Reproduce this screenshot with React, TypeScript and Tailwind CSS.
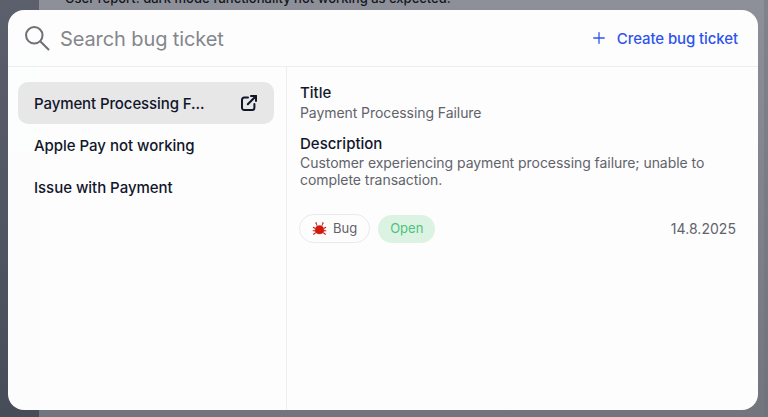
import { Plus } from 'lucide-react';

const tickets = ['Payment Processing Failure', 'Apple Pay not working', 'Issue with Payment'];

function SearchIcon() {
  return (
    <svg viewBox="0 0 24 24" className="h-[26px] w-[26px] text-[#6f7177]" fill="none" stroke="currentColor" strokeWidth={1.9} strokeLinecap="round">
      <circle cx="9.5" cy="9.5" r="7.6" />
      <path d="M15.2 15.2 22.6 22.6" />
    </svg>
  );
}

function OpenIcon() {
  return (
    <svg viewBox="0 0 18 18" className="h-[18px] w-[18px] text-[#11162b]" fill="none" stroke="currentColor" strokeWidth={2} strokeLinecap="round" strokeLinejoin="round">
      <path d="M8 3.6H4.2A2.2 2.2 0 0 0 2 5.8v8A2.2 2.2 0 0 0 4.2 16h8a2.2 2.2 0 0 0 2.2-2.2V10" />
      <path d="M7.8 10.2 16 2" />
      <path d="M11 2h5v5" />
    </svg>
  );
}

function BugIcon() {
  return (
    <svg viewBox="0 0 16 16" className="h-[15px] w-[15px]" fill="#d0190f" stroke="#d0190f">
      <path d="M3.2 10c0-3.2 2-5.2 4.8-5.2s4.8 2 4.8 5.2c0 2.2-2 3.8-4.8 3.8S3.2 12.2 3.2 10Z" strokeWidth={0.4} />
      <path d="M1 6.6 3.6 8M15 6.6 12.4 8M.8 10.4h2.6M15.2 10.4h-2.6M1.4 14.4l2.6-2M14.6 14.4l-2.6-2M5.4 4.8 4.6 3.4M10.6 4.8l.8-1.4" strokeWidth={1.2} fill="none" />
      <circle cx="4.4" cy="2.2" r="0.9" strokeWidth={0} />
      <circle cx="11.6" cy="2.2" r="0.9" strokeWidth={0} />
    </svg>
  );
}

export default function App() {
  return (
    <div className="relative flex h-[417px] w-[768px] overflow-hidden bg-gradient-to-b from-[#8d9099] to-[#72757e] font-['Inter',sans-serif]">
      {/* page behind the dialog */}
      <div className="w-[39px] shrink-0 bg-gradient-to-b from-[#5b606c] to-[#474c59]" />
      <div className="flex-1 pl-[26px] text-[#14161c]">
        <p className="-mt-[10px] text-[13px] font-medium leading-[16px]">
          User report: dark mode functionality not working as expected.
        </p>
      </div>
      <div className="w-[4px] shrink-0 bg-[#6d7079]/40" />

      {/* dialog */}
      <div className="absolute left-2 top-[10px] flex h-[400px] w-[750px] flex-col rounded-2xl bg-white/[0.985]">
        <div className="flex h-[57px] shrink-0 items-center justify-between border-b border-[#eeeef0] pl-4 pr-5">
          <div className="flex items-center gap-[10px]">
            <SearchIcon />
            <span className="pt-[1px] text-[20px] tracking-[-0.1px] text-[#84868c]">Search bug ticket</span>
          </div>
          <button className="flex items-center gap-[9px] text-[15px] font-medium leading-[20px] tracking-[-0.1px] text-[#2f54eb]">
            <Plus className="h-[18px] w-[18px]" strokeWidth={1.75} />
            <span className="pt-[1px]">Create bug ticket</span>
          </button>
        </div>

        <div className="flex min-h-0 flex-1">
          <div className="w-[279px] shrink-0 border-r border-[#eeeef0] pl-[10px] pr-[12px] pt-[15px]">
            <div className="flex flex-col">
              <div className="flex h-[42px] items-center justify-between rounded-[10px] bg-[#e7e7e7] pl-4 pr-4">
                <span className="pt-[1px] text-[15px] font-medium leading-[20px] tracking-[-0.1px] text-[#11162b]">Payment Processing F...</span>
                <OpenIcon />
              </div>
              {tickets.slice(1).map((t) => (
                <div key={t} className="flex h-[42px] items-center pl-4">
                  <span className="pt-[1px] text-[15px] font-medium leading-[20px] tracking-[-0.03px] text-[#11162b]">{t}</span>
                </div>
              ))}
            </div>
          </div>

          <div className="flex flex-1 flex-col pl-[13px] pr-[22px] pt-[16px]">
            <h3 className="text-[15px] font-medium leading-[20px] text-[#11162b]">Title</h3>
            <p className="text-[14px] leading-[20px] tracking-[-0.07px] text-[#61636b]">Payment Processing Failure</p>
            <h3 className="mt-[11px] text-[15px] font-medium leading-[20px] text-[#11162b]">Description</h3>
            <p className="text-[14px] leading-[17px] tracking-[-0.05px] text-[#61636b]">
              Customer experiencing payment processing failure; unable to complete transaction.
            </p>
            <div className="mt-[26px] flex items-center justify-between">
              <div className="-ml-[1px] flex items-center gap-2">
                <span className="flex h-[29px] items-center gap-[6px] rounded-full border border-[#eaeaec] px-3 text-[13px] text-[#61636b]">
                  <BugIcon />
                  Bug
                </span>
                <span className="flex h-[28px] items-center rounded-full bg-[#dcf3e4] px-3 text-[13px] text-[#4cc27a]">
                  Open
                </span>
              </div>
              <span className="text-[14px] tracking-[0.05px] text-[#61636b]">14.8.2025</span>
            </div>
          </div>
        </div>
      </div>
    </div>
  );
}
